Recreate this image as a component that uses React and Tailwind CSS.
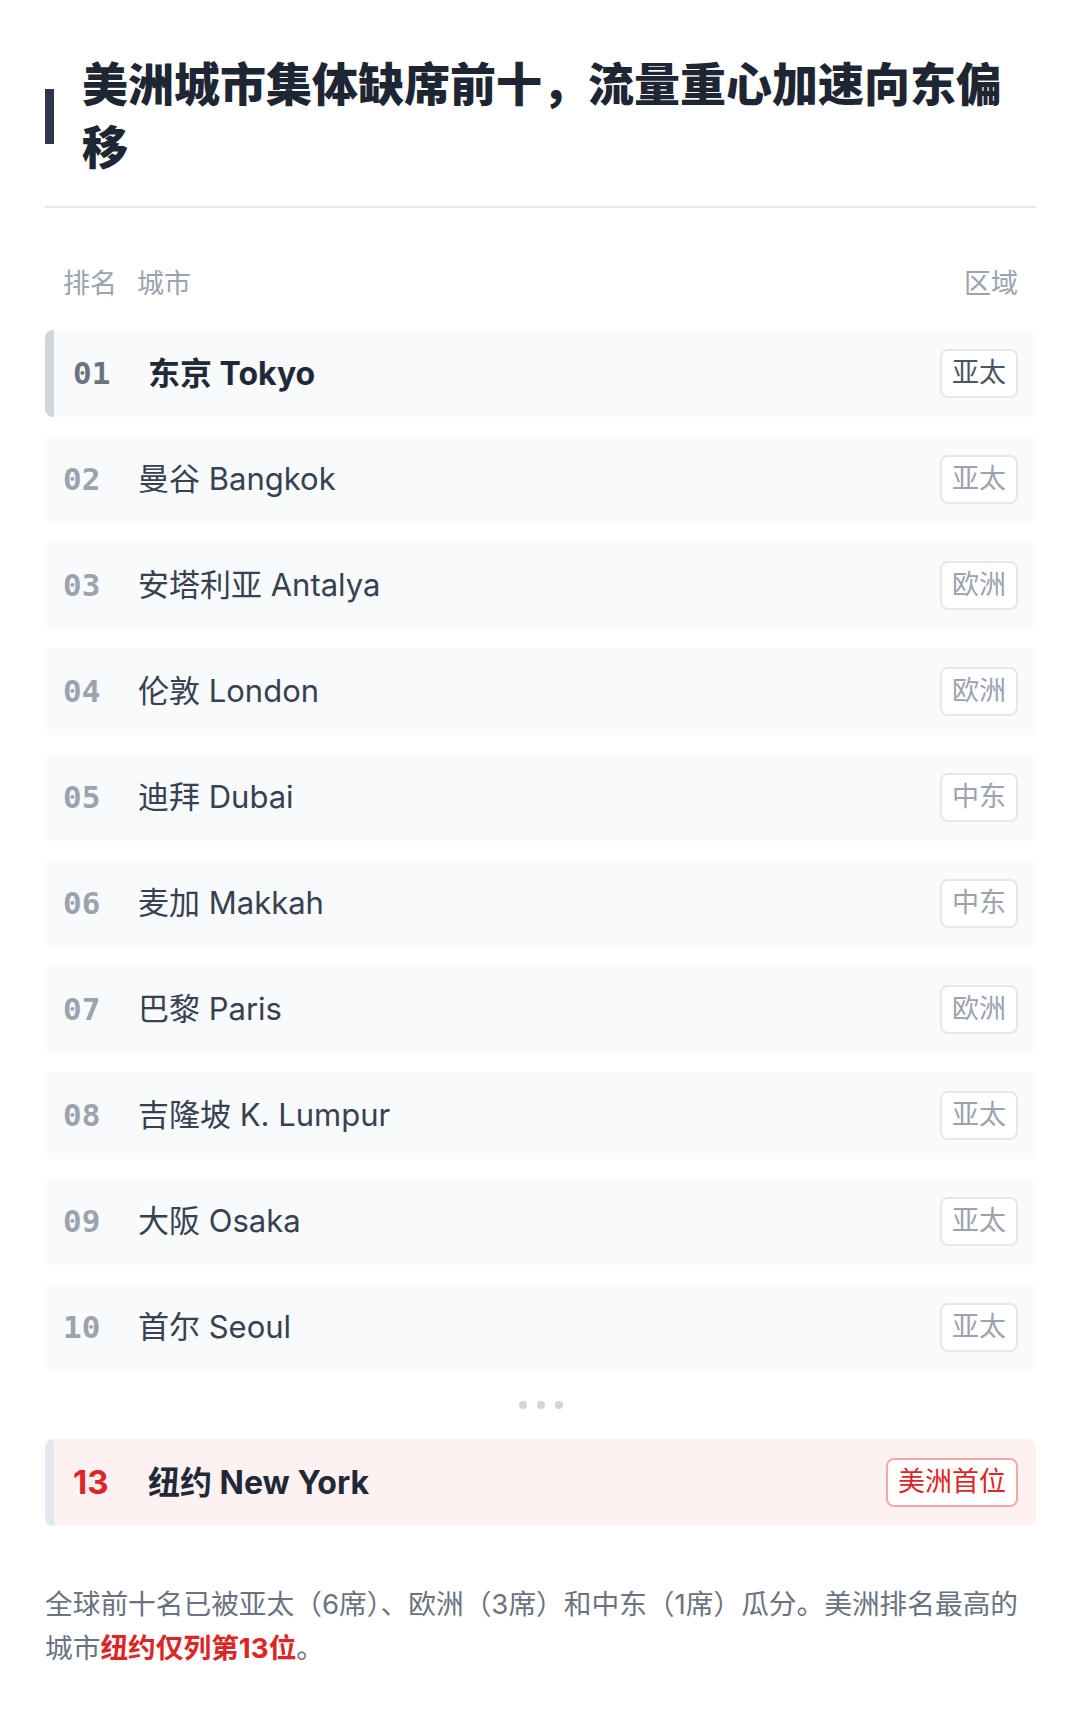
import React from "react";

const rows = [
  { n: "01", name: "东京 Tokyo", region: "亚太", top: true },
  { n: "02", name: "曼谷 Bangkok", region: "亚太" },
  { n: "03", name: "安塔利亚 Antalya", region: "欧洲" },
  { n: "04", name: "伦敦 London", region: "欧洲" },
  { n: "05", name: "迪拜 Dubai", region: "中东" },
  { n: "06", name: "麦加 Makkah", region: "中东" },
  { n: "07", name: "巴黎 Paris", region: "欧洲" },
  { n: "08", name: "吉隆坡 K. Lumpur", region: "亚太" },
  { n: "09", name: "大阪 Osaka", region: "亚太" },
  { n: "10", name: "首尔 Seoul", region: "亚太" },
];

const sans = "font-['Inter','Noto_Sans_CJK_SC',sans-serif]";

export default function App() {
  return (
    <div className={`w-[1080px] min-h-[1712px] bg-white pl-[45px] pr-[44px] pt-[53px] ${sans}`}>
      <div className="flex items-center">
        <div className="w-[9px] h-[55px] bg-[#2d3748] shrink-0" />
        <h1 className="pl-[28px] text-[46px] leading-[63px] font-black text-[#1e2533]">
          美洲城市集体缺席前十，流量重心加速向东偏移
        </h1>
      </div>
      <div className="mt-[27px] h-[2px] bg-[#e5e7eb]" />

      <div className="mt-[58px] flex items-center px-[18px] text-[27px] leading-[36px] text-[#9ca3af]">
        <span className="w-[74px]">排名</span>
        <span className="flex-1">城市</span>
        <span>区域</span>
      </div>

      <div className="mt-[28px] flex flex-col gap-[19px]">
        {rows.map((r) => (
          <div
            key={r.n}
            className={`h-[87px] flex items-center rounded-lg bg-[#f8fafc] pr-[18px] ${
              r.top ? "border-l-[9px] border-[#d1d5db] pl-[19px]" : "pl-[18px]"
            }`}
          >
            <span
              className={`w-[75px] font-['DejaVu_Sans_Mono',monospace] font-bold text-[31px] ${
                r.top ? "text-[#6b7280]" : "text-[#9ca3af]"
              }`}
            >
              {r.n}
            </span>
            <span
              className={`flex-1 ${
                r.top ? "text-[32px] font-bold text-[#1f2937]" : "text-[31px] text-[#374151]"
              }`}
            >
              {r.name}
            </span>
            <span
              className={`h-[49px] flex items-center px-[10px] rounded-lg border-2 border-[#e5e7eb] bg-white text-[27px] ${
                r.top ? "text-[#4b5563]" : "text-[#9ca3af]"
              }`}
            >
              {r.region}
            </span>
          </div>
        ))}
      </div>

      <div className="mt-[30px] h-[8px] flex justify-center gap-[10px]">
        <span className="w-[8px] h-[8px] rounded-full bg-[#d1d5db]" />
        <span className="w-[8px] h-[8px] rounded-full bg-[#d1d5db]" />
        <span className="w-[8px] h-[8px] rounded-full bg-[#d1d5db]" />
      </div>

      <div className="mt-[30px] h-[87px] flex items-center rounded-lg bg-[#fef1f1] border-l-[9px] border-[#e2e8f0] pl-[19px] pr-[18px]">
        <span className="w-[75px] font-bold text-[33px] text-[#dc2626]">13</span>
        <span className="flex-1 text-[32px] font-bold text-[#1f2937]">纽约 New York</span>
        <span className="h-[49px] flex items-center px-[10px] rounded-lg border-2 border-[#fca5a5] bg-white text-[27px] text-[#dc2626]">
          美洲首位
        </span>
      </div>

      <p className="mt-[56px] text-[27.7px] leading-[44px] text-[#6b7280]">
        全球前十名已被亚太（6席）、欧洲（3席）和中东（1席）瓜分。美洲排名最高的
        <br />
        城市<span className="font-bold text-[#dc2626]">纽约仅列第13位</span>。
      </p>
    </div>
  );
}
